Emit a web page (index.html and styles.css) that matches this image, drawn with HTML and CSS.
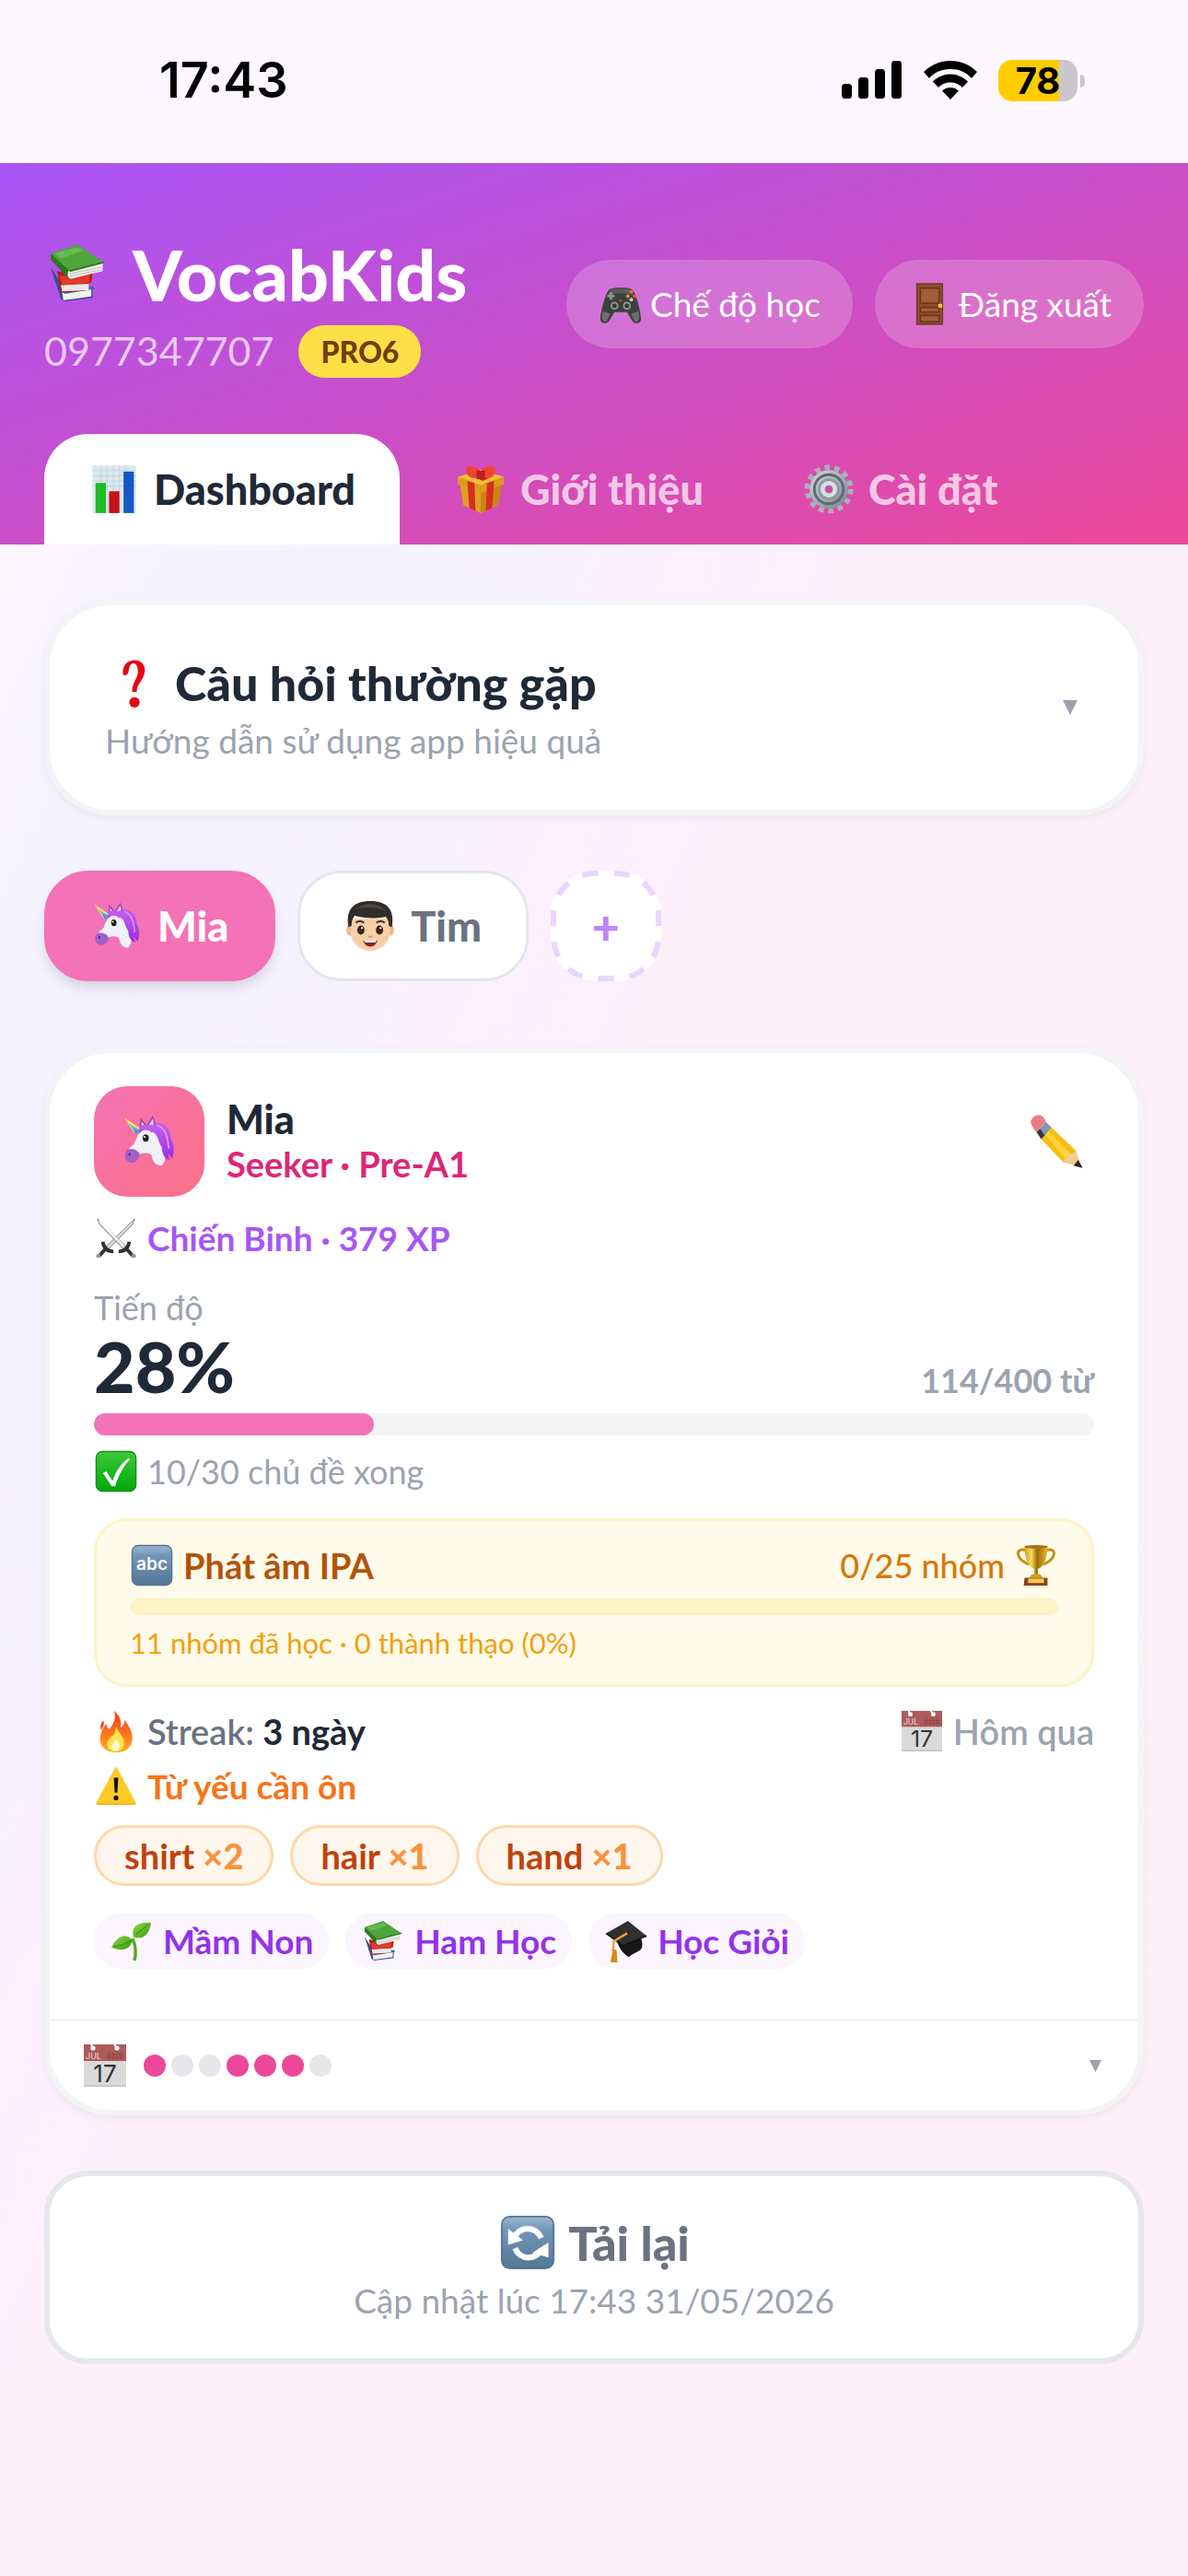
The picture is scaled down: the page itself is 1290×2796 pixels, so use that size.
FILE: index.html
```html
<!DOCTYPE html>
<html lang="vi">
<head>
<meta charset="utf-8">
<meta name="viewport" content="width=device-width, initial-scale=1">
<title>VocabKids</title>
<link rel="stylesheet" href="styles.css">
</head>
<body>
<div class="status">
  <span class="status-time">17:43</span>
  <div class="status-right">
    <svg class="signal" viewBox="0 0 66 42" aria-hidden="true"><rect y="25" width="11" height="16" rx="3.500"/><rect x="18" y="18" width="11" height="23" rx="3.500"/><rect x="36" y="9" width="11" height="32" rx="3.500"/><rect x="54" width="11" height="41" rx="3.500"/></svg>
    <svg class="wifi" viewBox="0 0 58 42" aria-hidden="true"><path d="M29 0C18 0 8 4 0 12l6 7C12 12 20 9 29 9s17 3 23 10l6-7C50 4 40 0 29 0zM29 14.500c-7 0-14 3-19 8l6 6.500c4-4 8-5.500 13-5.500s9 1.500 13 5.500l6-6.500c-5-5-12-8-19-8zM29 29c-3.500 0-6 1-9 3.500L29 42l9-9.500C35 30 32.500 29 29 29z"/></svg>
    <span class="battery">78</span>
  </div>
</div>

<header class="header">
  <div class="header-row">
    <div>
      <h1 class="brand"><svg class="icon icon-xl"><use href="#books"/></svg>VocabKids</h1>
      <div class="account"><span class="phone">0977347707</span><span class="plan">PRO6</span></div>
    </div>
    <div class="header-actions">
      <button class="pill-button" type="button"><svg class="icon"><use href="#gamepad"/></svg>Chế độ học</button>
      <button class="pill-button" type="button"><svg class="icon"><use href="#door"/></svg>Đăng xuất</button>
    </div>
  </div>
  <nav class="tabs">
    <a class="tab tab-active" href="#dashboard"><svg class="icon icon-md"><use href="#chart"/></svg>Dashboard</a>
    <a class="tab" href="#referral"><svg class="icon icon-md"><use href="#gift"/></svg>Giới thiệu</a>
    <a class="tab" href="#settings"><svg class="icon icon-md"><use href="#gear"/></svg>Cài đặt</a>
  </nav>
</header>

<main class="content" id="dashboard">
  <button class="faq" type="button">
    <span class="faq-text">
      <span class="faq-title"><svg class="icon icon-lg"><use href="#question"/></svg>Câu hỏi thường gặp</span>
      <span class="hint">Hướng dẫn sử dụng app hiệu quả</span>
    </span>
    <svg class="arrow" viewBox="0 0 16 16" aria-hidden="true"><path d="M0 0h16L8 16z"/></svg>
  </button>

  <div class="kids">
    <button class="kid kid-active" type="button"><svg class="icon icon-md"><use href="#unicorn"/></svg>Mia</button>
    <button class="kid" type="button"><svg class="icon icon-md"><use href="#boy"/></svg>Tim</button>
    <button class="kid-add" type="button" aria-label="Thêm bé"><svg class="dashes" viewBox="0 0 120 120" aria-hidden="true"><path d="M60 117H48A45 45 0 0 1 3 72V48A45 45 0 0 1 48 3H72A45 45 0 0 1 117 48V72A45 45 0 0 1 72 117Z" pathLength="330" stroke-dasharray="15 15" stroke-dashoffset="7.500"/></svg><span class="plus">+</span></button>
  </div>

  <section class="card">
    <div class="card-body">
      <div class="profile">
        <div class="avatar"><svg class="icon icon-lg"><use href="#unicorn"/></svg></div>
        <div class="profile-text">
          <h2 class="name">Mia</h2>
          <p class="stage">Seeker · Pre-A1</p>
        </div>
        <button class="edit" type="button" aria-label="Sửa"><svg class="icon icon-lg"><use href="#pencil"/></svg></button>
      </div>
      <p class="row rank"><svg class="icon"><use href="#swords"/></svg>Chiến Binh · 379 XP</p>
      <p class="label">Tiến độ</p>
      <div class="score"><strong class="percent">28%</strong><span class="count">114/400 từ</span></div>
      <div class="bar"><div class="bar-fill" style="width:28%"></div></div>
      <p class="row topics"><svg class="icon"><use href="#check"/></svg>10/30 chủ đề xong</p>

      <div class="ipa">
        <div class="split">
          <span class="row ipa-title"><svg class="icon" viewBox="0 0 48 48"><rect x="1.500" y="1.500" width="45" height="45" rx="7" fill="url(#g-blue)" stroke="#587492" stroke-width="1.500"/><text x="24" y="29" class="abc-text" text-anchor="middle">abc</text></svg>Phát âm IPA</span>
          <span class="row ipa-count">0/25 nhóm<svg class="icon"><use href="#trophy"/></svg></span>
        </div>
        <div class="ipa-bar"></div>
        <p class="ipa-note">11 nhóm đã học · 0 thành thạo (0%)</p>
      </div>

      <div class="split streak">
        <span class="row"><svg class="icon"><use href="#fire"/></svg><span>Streak: <b class="days">3 ngày</b></span></span>
        <span class="row last-seen"><svg class="icon" viewBox="0 0 48 48"><use href="#calendar"/><text class="cal-month" x="3" y="17">JUL</text><text class="cal-day" x="24" y="42" text-anchor="middle">17</text></svg>Hôm qua</span>
      </div>
      <p class="row weak"><svg class="icon"><use href="#warning"/></svg>Từ yếu cần ôn</p>
      <ul class="chips words">
        <li class="word">shirt <b>×2</b></li>
        <li class="word">hair <b>×1</b></li>
        <li class="word">hand <b>×1</b></li>
      </ul>
      <ul class="chips">
        <li class="row award"><svg class="icon"><use href="#seedling"/></svg>Mầm Non</li>
        <li class="row award"><svg class="icon"><use href="#books"/></svg>Ham Học</li>
        <li class="row award"><svg class="icon"><use href="#gradcap"/></svg>Học Giỏi</li>
      </ul>
    </div>
    <button class="week" type="button" aria-label="Lịch học tuần">
      <svg class="icon" viewBox="0 0 48 48"><use href="#calendar"/><text class="cal-month" x="3" y="17">JUL</text><text class="cal-day" x="24" y="42" text-anchor="middle">17</text></svg>
      <span class="dots"><i class="dot on"></i><i class="dot"></i><i class="dot"></i><i class="dot on"></i><i class="dot on"></i><i class="dot on"></i><i class="dot"></i></span>
      <svg class="arrow arrow-sm" viewBox="0 0 16 16" aria-hidden="true"><path d="M0 0h16L8 16z"/></svg>
    </button>
  </section>

  <button class="reload" type="button">
    <span class="reload-title"><svg class="icon icon-lg"><use href="#reload"/></svg>Tải lại</span>
    <span class="hint">Cập nhật lúc 17:43 31/05/2026</span>
  </button>
</main>

<svg class="sprite" width="0" height="0" aria-hidden="true">
  <defs>
    <linearGradient id="g-blue" x2="0" y2="1"><stop stop-color="#9db8d0"/><stop offset=".25" stop-color="#7396b8"/><stop offset="1" stop-color="#557795"/></linearGradient>
    <linearGradient id="g-green" x2="0" y2="1"><stop stop-color="#3fc93c"/><stop offset="1" stop-color="#00a808"/></linearGradient>
    <linearGradient id="g-gold"><stop stop-color="#d79a16"/><stop offset=".3" stop-color="#f7dc5a"/><stop offset=".55" stop-color="#9c6a0c"/><stop offset="1" stop-color="#eebb2c"/></linearGradient>
    <linearGradient id="g-fire" x2="0" y2="1"><stop stop-color="#f5391f"/><stop offset=".6" stop-color="#ff7a1c"/><stop offset="1" stop-color="#ffb52b"/></linearGradient>
    <linearGradient id="g-leaf" x2="1" y2="1"><stop stop-color="#8bdb3b"/><stop offset="1" stop-color="#3b9b12"/></linearGradient>
    <linearGradient id="g-mane" x2="0" y2="1"><stop stop-color="#c65cf2"/><stop offset="1" stop-color="#9a2fe0"/></linearGradient>
    <linearGradient id="g-steel" x2="1" y2="1"><stop stop-color="#d3dade"/><stop offset="1" stop-color="#76838b"/></linearGradient>
  </defs>
  <symbol id="books" viewBox="0 0 48 48">
    <path d="M3 19l8 25 3 2 22-3v-7L14 36z" fill="#2f4d97"/><path d="M12 39l23-3v6l-22 3z" fill="#f1f0ee"/><path d="M13 38l23-4 2 2-24 4z" fill="#3c63b4"/>
    <path d="M8 22l25 4v11L11 39z" fill="#b51e17"/><path d="M11 33l22-1v5l-21 1z" fill="#ece9e6"/><path d="M10 26l25-3v8l-23 2z" fill="#e23a2b"/><path d="M35 24l-1 7" stroke="#b51e17" stroke-width="2"/>
    <path d="M3 8v5l14 15 3-1V21z" fill="#2c7824"/><path d="M17 22l27-6v6l-25 6c-3 0-3-4-2-6z" fill="#f6f5f3"/><path d="M18 24l25-5M18 26l25-5" stroke="#c9c7c3" stroke-width="1"/><path d="M3 8L24 1l21 14-27 7z" fill="#4fa63b"/><path d="M18 22l27-7" stroke="#2c7824" stroke-width="1.500"/><path d="M6 8l18-5 4 3-17 6z" fill="#68b955"/>
  </symbol>
  <symbol id="gamepad" viewBox="0 0 48 48">
    <path d="M12 7c6-2 18-2 24 0 5 2 11 26 11 34 0 5-7 7-10 2l-6-10H17l-6 10c-3 5-10 3-10-2C1 33 7 9 12 7z" fill="#3c413d"/><path d="M12 8c6-2 18-2 24 0l4 7c-8-4-24-4-32 0z" fill="#555c56"/>
    <path d="M4 32l8 3-4 9c-5 1-6-5-4-12zM44 32l-8 3 4 9c5 1 6-5 4-12z" fill="#6a706b"/>
    <path d="M13 11v8M9 15h8" stroke="#8f9791" stroke-width="3"/><circle cx="17" cy="26" r="4.500" fill="#89958e"/><circle cx="17" cy="26" r="2.500" fill="#303532"/><circle cx="31" cy="26" r="4.500" fill="#89958e"/><circle cx="31" cy="26" r="2.500" fill="#303532"/><circle cx="36" cy="10" r="2" fill="#ff6b2c"/><circle cx="40" cy="15" r="2" fill="#ff5426"/><circle cx="32" cy="15" r="2" fill="#f58b3a"/><circle cx="36" cy="19" r="2" fill="#c8cdca"/><circle cx="24" cy="20" r="1.500" fill="#b35634"/>
  </symbol>
  <symbol id="door" viewBox="0 0 48 48">
    <path d="M10 1h29v46H10z" fill="#8d4d2c"/><path d="M10 1h29v46H10z" fill="none" stroke="#713b21" stroke-width="1.500"/><path d="M14 6h21v17H14zM14 28h21v5H14zM14 37h21v7H14z" fill="#a35d39" stroke="#67351d" stroke-width="1.500"/><circle cx="36.500" cy="26" r="2.500" fill="#f8c83b"/>
  </symbol>
  <symbol id="chart" viewBox="0 0 48 48">
    <path d="M3 1h42v46H3z" fill="#dde7ec"/><path d="M3 6h42M3 11h42M3 16h42M3 21h42M11 1v46M17 1v46M23 1v46M29 1v46M35 1v46" stroke="#b9d7e6" stroke-width=".8"/><path d="M6 18h10v29H6z" fill="#20bb25"/><path d="M19 26h10v21H19z" fill="#c6121c"/><path d="M33 7h10v40H33z" fill="#1458c7"/>
  </symbol>
  <symbol id="gift" viewBox="0 0 48 48">
    <path d="M4 19l20 8 20-8-3 20-17 8L7 39z" fill="#e0a01f"/><path d="M24 27l20-8-3 20-17 8z" fill="#c98414"/><path d="M2 12l22-7 22 7v7l-22 8L2 19z" fill="#f2bd36"/><path d="M2 12l22 8 22-8v7l-22 8L2 19z" fill="#dc9a1b"/><path d="M11 16l7 2 1 27-6-3zM37 16l-7 2-1 27 6-3z" fill="#d92b22"/><path d="M12 10l10-4 14 5-10 5z" fill="#c8241c"/><path d="M24 11C17 16 9 12 10 4c0-4 10-3 14 3 4-6 13-7 14-3 1 8-7 12-14 7z" fill="#ee4434"/><path d="M20 6h8v8h-8z" fill="#c01e17"/>
  </symbol>
  <symbol id="gear" viewBox="0 0 48 48">
    <circle cx="24" cy="24" r="21" fill="none" stroke="#a6b2b9" stroke-width="5" stroke-dasharray="5 4.430"/><circle cx="24" cy="24" r="18.500" fill="url(#g-steel)"/><circle cx="24" cy="24" r="14" fill="none" stroke="#5d6a72" stroke-width="2.500"/><circle cx="24" cy="24" r="10.500" fill="#8d9aa2"/><circle cx="24" cy="24" r="6" fill="none" stroke="#d8e0e4" stroke-width="4"/><circle cx="24" cy="24" r="3.500" fill="#c74fa8"/>
  </symbol>
  <symbol id="question" viewBox="0 0 48 48">
    <path d="M14 16C13 1 34 1 33 14c-1 9-7 10-7 18h-4c0-9 5-11 5-18 0-9-7-9-8-1 0 5-5 6-5 3z" fill="#e30613"/><circle cx="24" cy="41" r="4.500" fill="#e30613"/>
  </symbol>
  <symbol id="unicorn" viewBox="0 0 48 48">
    <path d="M25 9c8-4 18 2 18 13 3 5 3 10 1 17l-4-5-2 6-7-10z" fill="url(#g-mane)"/><path d="M19 14c3-4 8-5 13-1 4 6 3 12 6 19 1 5 0 9-3 13-5 0-8-3-9-9-3-3-7-2-10-1-2 6-8 8-11 4-3-5 1-9 6-13 2-5 3-9 8-12z" fill="#f1f0f6"/><path d="M5 31c4-1 10 0 11 5-2 7-9 8-12 4-2-4-1-7 1-9z" fill="#a25fca"/><ellipse cx="7" cy="35" rx="1" ry="1.500" fill="#6a2d91"/>
    <path d="M2 3l15 10-5 5z" fill="#ffe45c"/><path d="M6 8l10 6-3 4z" fill="#45d0dc"/><path d="M10 12l6 3-4 3z" fill="#6b80ed"/><path d="M17 5l5 6-6 4zM27 3c3 4 2 8-1 12l-4-4z" fill="#dfc8ee" stroke="#a54bb4" stroke-width="1.500"/><path d="M17 10c2-1 4 0 6 0 6-2 12 1 12 8 0 5 1 7 4 10 2 4 1 8 3 12-5-1-7-6-7-11-3-4-3-9-6-12-3-2-6-3-10-3-3 1-5-2-2-4z" fill="url(#g-mane)"/><path d="M31 10c7 2 9 9 10 20" fill="none" stroke="#de93f7" stroke-width="1.500"/><ellipse cx="21" cy="21" rx="2.600" ry="3.200" fill="#242024"/><circle cx="20" cy="20" r=".8" fill="#fff"/>
  </symbol>
  <symbol id="boy" viewBox="0 0 48 48">
    <ellipse cx="4.500" cy="28" rx="3.500" ry="5.500" fill="#e9b990"/><ellipse cx="43.500" cy="28" rx="3.500" ry="5.500" fill="#e9b990"/><path d="M5 17h38v13c0 10-9 18-19 18S5 40 5 30z" fill="#f6cfa6"/><path d="M3 25C0 8 8 0 24 0s24 8 21 25l-3-1c0-5-1-6-3-9-9 2-21 2-30-1-2 3-3 5-3 10z" fill="#302c2a"/><path d="M10 8c8-8 24-6 29 2-8-4-19-5-29-2z" fill="#4b4643"/><ellipse cx="15" cy="28" rx="3.500" ry="4.500" fill="#3a2519"/><ellipse cx="33" cy="28" rx="3.500" ry="4.500" fill="#3a2519"/><circle cx="16" cy="26" r="1" fill="#fff"/><circle cx="34" cy="26" r="1" fill="#fff"/><path d="M10 21q4-3 8 0M30 21q4-3 8 0" fill="none" stroke="#52372a" stroke-width="2"/><path d="M22 34q2 1 4 0" fill="none" stroke="#d29870" stroke-width="1.500"/><path d="M17 38q7 2 14 0-2 6-7 6t-7-6z" fill="#872719"/><path d="M18 38h12l-1 2H19z" fill="#fff"/>
  </symbol>
  <symbol id="pencil" viewBox="0 0 48 48">
    <path d="M2 8C1 5 5 1 9 1c3 0 5 3 6 6l-8 9C5 14 3 12 2 8z" fill="#ec7e83"/><path d="M15 7l5 5-9 10-4-6z" fill="#8297aa"/><path d="M7 16l4 6 3-3-4-6z" fill="#343638"/><path d="M20 12l21 20c1 5-5 11-11 10L11 22z" fill="#f7bd10"/><path d="M17 15l20 20-4 5-18-21z" fill="#ffd43a"/><path d="M41 32l5 14-16-4c1-6 6-4 5-8 2 1 5 1 6-2z" fill="#f1cb91"/><path d="M43 40l4 7-8-2z" fill="#292725"/>
  </symbol>
  <symbol id="swords" viewBox="0 0 48 48">
    <path d="M3 2l33 32-3 3L5 8zM45 2L12 34l3 3L43 8z" fill="#d0dadd" stroke="#8c8582" stroke-width="1"/><path d="M5 4l28 29" stroke="#f7ffff" stroke-width="2"/><path d="M9 28c1 7 5 11 12 11M39 28c-1 7-5 11-12 11M14 34L5 44M34 34l9 10" fill="none" stroke="#313130" stroke-width="4"/><circle cx="4" cy="44" r="2.500" fill="#9a9692"/><circle cx="44" cy="44" r="2.500" fill="#9a9692"/>
  </symbol>
  <symbol id="check" viewBox="0 0 48 48">
    <rect x="1.500" y="1.500" width="45" height="45" rx="7" fill="url(#g-green)" stroke="#168e19" stroke-width="1.500"/><path d="M9 26l4-2 7 11c4-12 9-19 18-26l2 1c-8 9-13 18-17 31h-4C16 36 13 31 9 26z" fill="#fff"/>
  </symbol>
  <symbol id="trophy" viewBox="0 0 48 48">
    <path d="M13 7C-1 3 1 17 16 23M35 7c14-4 12 10-3 16" fill="none" stroke="#c48c16" stroke-width="3"/><path d="M11 2h26c0 14-4 24-11 26v8h-4v-8C15 26 11 16 11 2z" fill="url(#g-gold)"/><ellipse cx="24" cy="3" rx="13" ry="2" fill="#a77416"/><path d="M18 36c0-3 12-3 12 0l2 2H16z" fill="#d69b18"/><path d="M11 38h26v9H10z" fill="#87451a"/><path d="M15 39h18v5H15z" fill="#f4ca4a"/>
  </symbol>
  <symbol id="fire" viewBox="0 0 48 48">
    <path d="M22 1c6 5 9 12 7 19 4-2 5-5 4-9 8 9 12 20 8 28-3 6-9 9-17 9-11 0-19-6-18-17 1-6 3-11 7-15 1 3 1 4 3 6 6-7 8-13 6-21z" fill="url(#g-fire)"/><path d="M10 12c-4 2-4 8-3 11 3-4 4-7 3-11z" fill="#f5502b"/><path d="M24 19c2 6 9 10 9 18 0 7-5 10-9 10-6 0-11-4-10-10 1-4 4-5 5-8 3 1 4-5 5-10z" fill="#ffe34c"/><path d="M24 33c3 3 5 6 4 9-1 6-9 5-9 0 0-4 3-5 5-9z" fill="#fffbd0"/>
  </symbol>
  <symbol id="calendar" viewBox="0 0 48 48">
    <path d="M1 1h46v46H1z" fill="#dadada"/><path d="M1 1h46v18H1z" fill="#ad5a5a"/><path d="M1 46h46" stroke="#c8c8c8" stroke-width="2"/><circle cx="11" cy="5" r="2.600" fill="#fff"/><circle cx="37" cy="5" r="2.600" fill="#fff"/><path d="M9 1l2 4M34 1l3 4" stroke="#fff" stroke-width="2"/><path d="M29 9v9M33 9v9M37 9v9M41 9v9M26 12h19M26 15h19" stroke="#914848" stroke-width="1"/>
  </symbol>
  <symbol id="warning" viewBox="0 0 48 48">
    <path d="M24 4L3 43h42z" fill="#fdca26" stroke="#fdca26" stroke-width="3" stroke-linejoin="round"/><path d="M2 44h44" stroke="#f3ae18" stroke-width="1.500"/><path d="M21.500 14h5l-1 17h-3z" fill="#111"/><circle cx="24" cy="37" r="2.700" fill="#111"/>
  </symbol>
  <symbol id="seedling" viewBox="0 0 48 48">
    <path d="M27 46c3-10 1-18-2-25" fill="none" stroke="#4ea81d" stroke-width="3.500"/><path d="M25 23C18 14 8 17 1 31c12 5 21 3 24-8z" fill="url(#g-leaf)"/><path d="M26 19C23 8 30 2 46 3c-2 14-10 20-20 16z" fill="url(#g-leaf)"/><path d="M4 30c7-1 13-3 20-7M28 17c5-4 10-8 15-12" fill="none" stroke="#2e8510" stroke-width="1"/>
  </symbol>
  <symbol id="gradcap" viewBox="0 0 48 48">
    <path d="M13 22l27-2c3 4 3 11 0 14-4 3-9 4-13 8-7-4-12-11-14-20z" fill="#181818"/><path d="M1 15L26 1l21 17-27 11z" fill="#303030"/><path d="M1 15l19 14 27-11" fill="none" stroke="#111" stroke-width="1.500"/><path d="M25 15L10 24l-1 11" fill="none" stroke="#e9a62e" stroke-width="2.500"/><path d="M9 33l4 1 1 14H6z" fill="#d48a18"/>
  </symbol>
  <symbol id="reload" viewBox="0 0 48 48">
    <rect x="1.500" y="1.500" width="45" height="45" rx="7" fill="url(#g-blue)" stroke="#537695" stroke-width="1.500"/><path d="M12 20c5-10 18-11 24 0M36 30c-5 9-18 10-23-1" fill="none" stroke="#fff" stroke-width="5"/><path d="M7 12v14l13-4zM42 24v13l-14-4z" fill="#fff"/>
  </symbol>
</svg>
</body>
</html>
```
FILE: styles.css
```css
* { box-sizing: border-box; }

body {
  margin: 0;
  min-height: 100vh;
  font-family: Lato, "Noto Sans", sans-serif;
  font-size: 36px;
  line-height: 48px;
  color: #1f2937;
  background: linear-gradient(to bottom right, #fdf6fc 10%, #f5f3ff 18%, #f6f2ff 32%, #fcf0ff 42%, #fcf1f8 48%, #fbf1f7 100%);
}

h1, h2, p, ul { margin: 0; padding: 0; font-size: inherit; }
ul { list-style: none; }
button { margin: 0; font: inherit; color: inherit; cursor: pointer; }
a { color: inherit; text-decoration: none; }

.icon { flex: none; width: 48px; height: 46px; }
.icon-md { width: 56px; height: 54px; }
.icon-lg { width: 64px; height: 60px; }
.icon-xl { width: 72px; height: 66px; }
.sprite { display: block; }
.abc-text { font: 600 20px Inter, sans-serif; fill: #fff; }
.cal-month { font: 500 9px Inter, sans-serif; fill: #e6cccc; }
.cal-day { font: 400 26px Inter, sans-serif; fill: #333; }

.row { display: flex; align-items: center; gap: 10px; }
.split { display: flex; align-items: center; justify-content: space-between; }

/* Status bar */
.status {
  display: flex;
  align-items: center;
  justify-content: space-between;
  padding: 54px 120px 57px 173px;
  background: #fdf8ff;
  color: #000;
  font-family: Inter, sans-serif;
}
.status-time { font-size: 54px; font-weight: 600; line-height: 66px; }
.status-right { display: flex; align-items: center; gap: 23px; }
.signal { width: 66px; height: 42px; }
.wifi { width: 58px; height: 42px; }
.battery {
  position: relative;
  width: 86px;
  border-radius: 15px;
  background: linear-gradient(to right, #ffcc00 77%, #cbc5ce 77%);
  font-size: 40px;
  font-weight: 700;
  line-height: 45px;
  text-align: center;
}
.battery::after {
  content: "";
  position: absolute;
  top: 16px;
  right: -8px;
  width: 5px;
  height: 14px;
  border-radius: 0 6px 6px 0;
  background: #cbc5ce;
}

/* Header */
.header {
  padding: 72px 48px 0;
  background: linear-gradient(to bottom right, #a855f7, #ec4899);
  color: #fff;
}
.header-row { display: flex; align-items: center; justify-content: space-between; }
.brand { display: flex; align-items: center; gap: 24px; font-size: 77px; font-weight: 900; line-height: 96px; }
.account { display: flex; align-items: center; gap: 27px; margin-top: 6px; }
.phone { font-size: 43px; line-height: 60px; color: rgba(255, 255, 255, .7); }
.plan {
  padding: 6px 24px;
  border-radius: 30px;
  background: #fde047;
  color: #713f12;
  font-size: 32px;
  font-weight: 900;
  line-height: 45px;
}
.header-actions { display: flex; gap: 24px; }
.pill-button {
  display: flex;
  align-items: center;
  gap: 8px;
  padding: 24px 35px;
  border: 0;
  border-radius: 48px;
  background: rgba(255, 255, 255, .2);
  font-size: 37px;
}
.tabs { display: flex; gap: 12px; margin-top: 60px; }
.tab {
  display: flex;
  align-items: center;
  gap: 15px;
  padding: 33px 48px;
  border-radius: 48px 48px 0 0;
  font-size: 45px;
  font-weight: 900;
  line-height: 54px;
  color: rgba(255, 255, 255, .7);
}
.tab-active { background: #fff; color: #1f2937; }

/* Content */
.content { display: flex; flex-direction: column; gap: 60px; padding: 60px 48px; }
.hint { display: block; font-size: 37px; line-height: 54px; color: #9ca3af; }
.arrow { flex: none; width: 16px; height: 16px; fill: #9ca3af; }
.arrow-sm { width: 13px; height: 13px; }

.faq {
  display: flex;
  align-items: center;
  justify-content: space-between;
  padding: 48px 66px 48px 60px;
  border: 6px solid #f3f4f6;
  border-radius: 72px;
  background: #fff;
  box-shadow: 0 3px 9px rgba(0, 0, 0, .05);
  text-align: left;
}
.faq-title, .reload-title { display: flex; align-items: center; gap: 12px; font-size: 52px; font-weight: 900; line-height: 72px; }

.kids { display: flex; gap: 24px; padding-bottom: 12px; }
.kid {
  display: flex;
  align-items: center;
  gap: 16px;
  padding: 30px 48px;
  border: 3px solid #e5e7eb;
  border-radius: 48px;
  background: #fff;
  color: #6b7280;
  font-size: 45px;
  font-weight: 900;
  line-height: 54px;
}
.kid-active { border-color: #f472b6; background: #f472b6; color: #fff; box-shadow: 0 9px 15px -3px rgba(0, 0, 0, .15); }
.kid-add {
  display: grid;
  place-items: center;
  width: 120px;
  height: 120px;
  padding: 0;
  border: 0;
  border-radius: 48px;
  background: #fff;
}
.dashes { grid-area: 1 / 1; width: 120px; height: 120px; fill: none; stroke: #e9d5ff; stroke-width: 6px; }
.plus { grid-area: 1 / 1; color: #c084fc; font-size: 52px; font-weight: 900; }

/* Child card */
.card {
  border: 6px solid #f3f4f6;
  border-radius: 72px;
  background: #fff;
  box-shadow: 0 3px 9px rgba(0, 0, 0, .05);
}
.card-body { padding: 36px 48px 54px; }
.profile { display: flex; align-items: center; gap: 24px; }
.avatar {
  display: grid;
  place-items: center;
  width: 120px;
  height: 120px;
  border-radius: 36px;
  background: linear-gradient(135deg, #f472b6, #fb7185);
}
.profile-text { flex: 1; }
.name { font-size: 43px; font-weight: 900; }
.stage { font-size: 38px; font-weight: 700; color: #db2777; }
.edit { display: grid; padding: 9px; border: 0; background: none; }
.rank { margin-top: 18px; font-size: 37px; font-weight: 700; line-height: 54px; color: #a855f7; }
.label { margin-top: 24px; color: #9ca3af; }
.score { display: flex; align-items: baseline; justify-content: space-between; }
.percent { font-size: 77px; font-weight: 900; line-height: 78px; }
.count { font-weight: 700; color: #9ca3af; }
.bar { height: 24px; margin-top: 12px; border-radius: 12px; background: #f3f4f6; }
.bar-fill { height: 100%; border-radius: 12px; background: #f472b6; }
.topics { margin-top: 12px; line-height: 54px; color: #9ca3af; }

.ipa { margin-top: 24px; padding: 24px 36px; border: 3px solid #fef3c7; border-radius: 36px; background: #fffbeb; }
.ipa-title { font-size: 38px; font-weight: 700; color: #b45309; }
.ipa-count { font-weight: 500; color: #d97706; }
.ipa-bar { height: 18px; margin-top: 12px; border-radius: 9px; background: #fef3c7; }
.ipa-note { margin-top: 9px; font-size: 31px; line-height: 42px; color: #f59e0b; }

.streak { margin-top: 24px; font-size: 38px; font-weight: 600; color: #6b7280; }
.days { font-weight: 700; color: #1f2937; }
.last-seen { color: #9ca3af; }
.weak { margin-top: 12px; font-size: 37px; font-weight: 700; color: #f97316; }
.chips { display: flex; flex-wrap: wrap; gap: 18px; }
.words { margin: 18px 0 30px; }
.word { padding: 6px 30px; border: 3px solid #fed7aa; border-radius: 33px; background: #fff7ed; font-size: 38px; font-weight: 700; color: #c2410c; }
.word b { font-weight: 900; color: #fb923c; }
.award { padding: 6px 17px; border-radius: 30px; background: #faf5ff; font-size: 37px; font-weight: 700; color: #9333ea; }

.week {
  display: flex;
  align-items: center;
  gap: 18px;
  width: 100%;
  padding: 24px 40px 24px 36px;
  border: 0;
  border-top: 3px solid #f3f4f6;
  border-radius: 0 0 66px 66px;
  background: none;
  line-height: 48px;
}
.week .icon { height: 48px; }
.dots { display: flex; flex: 1; gap: 6px; }
.dot { width: 24px; height: 24px; border-radius: 50%; background: #e5e7eb; }
.dot.on { background: #ec4899; }

.reload { padding: 36px; border: 6px solid #e5e7eb; border-radius: 48px; background: #fff; }
.reload-title { justify-content: center; color: #6b7280; }
```
